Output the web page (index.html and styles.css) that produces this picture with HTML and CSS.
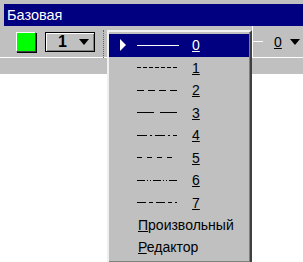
FILE: index.html
```html
<!DOCTYPE html>
<html lang="ru">
<head>
    <meta charset="UTF-8">
    <title>Базовая</title>
    <link rel="stylesheet" href="styles.css">
</head>
<body>
    <div class="ventana">
        <div class="titulo">Базовая</div>
        <div class="barra">
            <div class="fila">
                <div class="color"></div>
                <div class="combo"><span class="combo-num">1</span><span class="flecha"></span></div>
                <div class="separador"></div>
                <div class="resto">
                    <span class="linea-resto"></span>
                    <u class="num-resto">0</u>
                    <span class="flecha"></span>
                </div>
            </div>
            <div class="fila-baja"></div>
        </div>
    </div>

    <div class="menu">
        <div class="item activo">
            <span class="marca"></span>
            <svg class="muestra" width="42" height="3"><line x1="0" y1="1.5" x2="42" y2="1.5" /></svg>
            <u class="num">0</u>
        </div>
        <div class="item">
            <span class="marca"></span>
            <svg class="muestra" width="42" height="3"><line x1="0" y1="1.5" x2="40" y2="1.5" stroke-dasharray="4 2" /></svg>
            <u class="num">1</u>
        </div>
        <div class="item">
            <span class="marca"></span>
            <svg class="muestra" width="42" height="3"><line x1="0" y1="1.5" x2="40" y2="1.5" stroke-dasharray="7 4" /></svg>
            <u class="num">2</u>
        </div>
        <div class="item">
            <span class="marca"></span>
            <svg class="muestra" width="42" height="3"><line x1="0" y1="1.5" x2="40" y2="1.5" stroke-dasharray="17 6" /></svg>
            <u class="num">3</u>
        </div>
        <div class="item">
            <span class="marca"></span>
            <svg class="muestra" width="42" height="3"><line x1="0" y1="1.5" x2="40" y2="1.5" stroke-dasharray="10 3 2 3" /></svg>
            <u class="num">4</u>
        </div>
        <div class="item">
            <span class="marca"></span>
            <svg class="muestra" width="42" height="3"><line x1="0" y1="1.5" x2="40" y2="1.5" stroke-dasharray="5 5" /></svg>
            <u class="num">5</u>
        </div>
        <div class="item">
            <span class="marca"></span>
            <svg class="muestra" width="42" height="3"><line x1="0" y1="1.5" x2="40" y2="1.5" stroke-dasharray="8 2 1 2 1 2" /></svg>
            <u class="num">6</u>
        </div>
        <div class="item">
            <span class="marca"></span>
            <svg class="muestra" width="42" height="3"><line x1="0" y1="1.5" x2="40" y2="1.5" stroke-dasharray="9 3 4 3" /></svg>
            <u class="num">7</u>
        </div>
        <div class="item texto"><span><u>П</u>роизвольный</span></div>
        <div class="item texto"><span><u>Р</u>едактор</span></div>
    </div>
</body>
</html>
```

FILE: styles.css
```css
body {
    margin: 0;
    background-color: #ffffff;
    font-family: "Liberation Sans", Arial, sans-serif;
    font-size: 14px;
    overflow: hidden;
}

.ventana {
    height: 74px;
    box-sizing: border-box;
    background-color: #c0c0c0;
    padding: 4px 0 0 4px;
    display: flex;
    flex-direction: column;
}

.titulo {
    height: 22px;
    flex: none;
    line-height: 22px;
    background-color: #000080;
    color: #ffffff;
    font-size: 14.5px;
    padding-left: 3px;
}

.barra {
    flex: 1;
    margin-left: -4px;
    background-color: #c0c0c0;
    display: flex;
    flex-direction: column;
}

.fila {
    height: 31px;
    flex: none;
    display: flex;
    align-items: center;
    border-bottom: 1px solid #ffffff;
}

.fila-baja {
    flex: 1;
    background-color: #c0c0c0;
}

.color {
    width: 18px;
    height: 18px;
    margin-left: 16px;
    background-color: #00ff00;
    border: 1px solid #ffffff;
    border-right-color: #404040;
    border-bottom-color: #404040;
    box-shadow: 1px 1px 0 #000000;
}

.combo {
    width: 48px;
    height: 18px;
    margin-left: 9px;
    border: 1px solid #000000;
    box-shadow: inset 1px 1px 0 #ffffff, inset -1px -1px 0 #808080;
    display: flex;
    align-items: center;
}

.combo-num {
    font-weight: bold;
    font-size: 16px;
    margin-left: 12px;
}

.flecha {
    width: 0;
    height: 0;
    border-left: 5px solid transparent;
    border-right: 5px solid transparent;
    border-top: 6px solid #000000;
    margin-left: 12px;
}

.separador {
    width: 0;
    height: 30px;
    margin-left: 8px;
    border-left: 1px dotted #606060;
    align-self: flex-start;
    margin-top: 4px;
}

.resto {
    margin-left: auto;
    width: 50px;
    height: 31px;
    border-left: 1px solid #ffffff;
    display: flex;
    align-items: center;
}

.linea-resto {
    width: 10px;
    height: 1px;
    background-color: #ffffff;
}

.num-resto {
    margin-left: 11px;
}

.resto .flecha {
    margin-left: 8px;
}

.menu {
    position: absolute;
    left: 107px;
    top: 30px;
    width: 140px;
    height: 226px;
    padding: 2px 1px 2px 0;
    background-color: #c0c0c0;
    border: 2px solid;
    border-color: #f0f0f0 #404040 #404040 #f0f0f0;
    box-shadow: inset -1px -1px 0 #808080;
}

.item {
    height: 22.5px;
    display: flex;
    align-items: center;
    color: #000000;
}

.item.activo {
    background-color: #000080;
    color: #ffffff;
}

.marca {
    width: 17px;
    margin-left: 11px;
}

.activo .marca {
    height: 0;
    width: 0;
    border-top: 6px solid transparent;
    border-bottom: 6px solid transparent;
    border-left: 6px solid #ffffff;
    margin-right: 11px;
}

.muestra line {
    stroke: currentColor;
    stroke-width: 1;
}

.num {
    margin-left: 13px;
}

.item.texto {
    height: 22px;
    padding-left: 29px;
}
```
